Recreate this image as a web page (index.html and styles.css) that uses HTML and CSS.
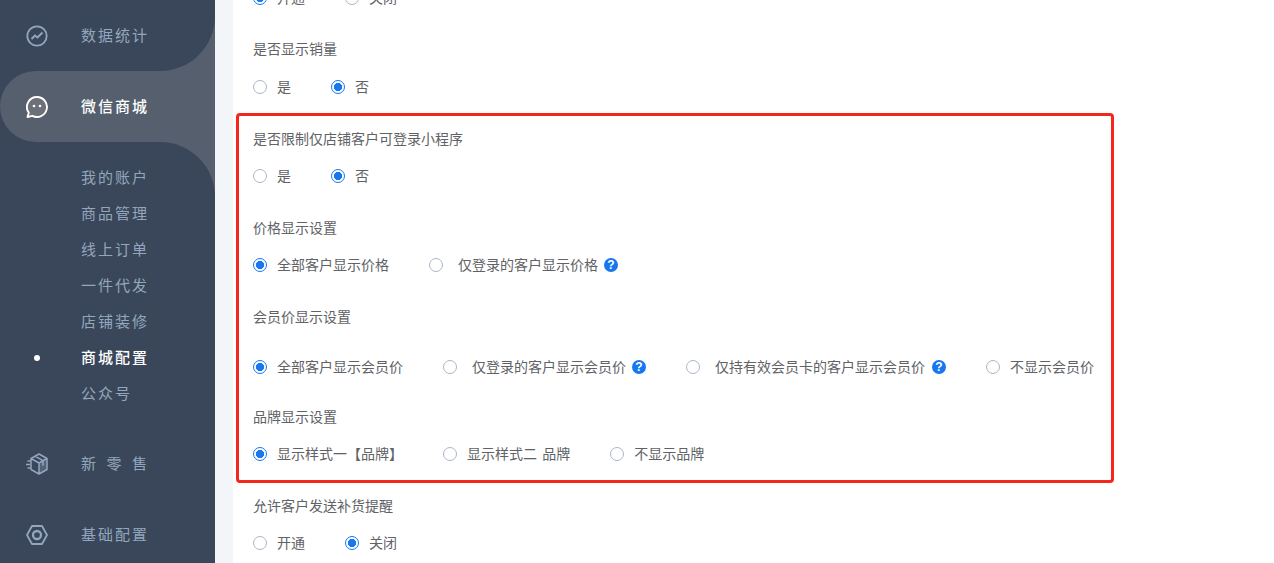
FILE: index.html
```html
<!DOCTYPE html>
<html lang="zh">
<head>
<meta charset="utf-8">
<title>商城配置</title>
<link rel="stylesheet" href="styles.css">
</head>
<body>
<div class="app">
  <aside class="sidebar">
    <div class="wave">
      <div class="nav-item before-active">
        <svg class="nav-icon" viewBox="0 0 22 22"><circle cx="11" cy="11" r="9.700" fill="none" stroke="currentColor" stroke-width="1.800"/><path d="M5.500 14l3.500-3.500 2.500 2 5-5" fill="none" stroke="currentColor" stroke-width="2"/></svg>
        <span class="nav-label">数据统计</span>
      </div>
      <div class="nav-item active">
        <svg class="nav-icon" viewBox="0 0 22 22"><path d="M11 1a10 10 0 1 1-4.600 18.900L1.500 21l1.300-4.200A10 10 0 0 1 11 1z" fill="#6d7078" stroke="#fff" stroke-width="1.900" stroke-linejoin="round"/><circle cx="8" cy="10" r="1.300" fill="#fff"/><circle cx="14" cy="10" r="1.300" fill="#fff"/></svg>
        <span class="nav-label">微信商城</span>
      </div>
      <ul class="submenu">
        <li class="sub-item">我的账户</li>
        <li class="sub-item">商品管理</li>
        <li class="sub-item">线上订单</li>
        <li class="sub-item">一件代发</li>
        <li class="sub-item">店铺装修</li>
        <li class="sub-item current">商城配置</li>
        <li class="sub-item">公众号</li>
      </ul>
    </div>
    <div class="nav-item">
      <svg class="nav-icon" viewBox="0 0 22 22"><path d="M13 10l8-4.500v11L13 21z" fill="currentColor" fill-opacity=".3"/><path d="M5 5.500L13 1l8 4.500v11L13 21l-8-4.500zM5 5.500l8 4.500 8-4.500M13 10v11M9 3.200l8 4.500v5" fill="none" stroke="currentColor" stroke-width="1.500" stroke-linejoin="round"/><path d="M1.500 8h3M0 11.500h4M1.500 15h3" stroke="currentColor" stroke-width="1.500"/></svg>
      <span class="nav-label spread">新零售</span>
    </div>
    <div class="nav-item">
      <svg class="nav-icon" viewBox="0 0 22 22"><path d="M6 2h10l5 9-5 9H6l-5-9z" fill="none" stroke="currentColor" stroke-width="1.800" stroke-linejoin="round"/><circle cx="11" cy="11" r="4" fill="none" stroke="currentColor" stroke-width="2.300"/></svg>
      <span class="nav-label">基础配置</span>
    </div>
  </aside>
  <div class="gutter"></div>
  <main class="main">
    <div class="form">
      <section class="field no-title">
        <div class="radios">
          <label class="radio"><i class="dot on"></i>开通</label>
          <label class="radio"><i class="dot"></i>关闭</label>
        </div>
      </section>
      <section class="field first">
        <h3 class="field-title">是否显示销量</h3>
        <div class="radios">
          <label class="radio"><i class="dot"></i>是</label>
          <label class="radio"><i class="dot on"></i>否</label>
        </div>
      </section>
      <section class="field">
        <h3 class="field-title">是否限制仅店铺客户可登录小程序</h3>
        <div class="radios">
          <label class="radio"><i class="dot"></i>是</label>
          <label class="radio"><i class="dot on"></i>否</label>
        </div>
      </section>
      <section class="field">
        <h3 class="field-title">价格显示设置</h3>
        <div class="radios">
          <label class="radio"><i class="dot on"></i>全部客户显示价格</label>
          <label class="radio wide"><i class="dot"></i>仅登录的客户显示价格<i class="help">?</i></label>
        </div>
      </section>
      <section class="field member">
        <h3 class="field-title">会员价显示设置</h3>
        <div class="radios">
          <label class="radio"><i class="dot on"></i>全部客户显示会员价</label>
          <label class="radio wide"><i class="dot"></i>仅登录的客户显示会员价<i class="help">?</i></label>
          <label class="radio wide"><i class="dot"></i>仅持有效会员卡的客户显示会员价<i class="help far">?</i></label>
          <label class="radio"><i class="dot"></i>不显示会员价</label>
        </div>
      </section>
      <section class="field">
        <h3 class="field-title">品牌显示设置</h3>
        <div class="radios">
          <label class="radio"><i class="dot on"></i>显示样式一【品牌】</label>
          <label class="radio"><i class="dot"></i>显示样式二 品牌</label>
          <label class="radio"><i class="dot"></i>不显示品牌</label>
        </div>
      </section>
      <section class="field">
        <h3 class="field-title">允许客户发送补货提醒</h3>
        <div class="radios">
          <label class="radio"><i class="dot"></i>开通</label>
          <label class="radio"><i class="dot on"></i>关闭</label>
        </div>
      </section>
    </div>
    <div class="highlight"></div>
  </main>
</div>
</body>
</html>
```
FILE: styles.css
```css
* { box-sizing: border-box; }
html, body { margin: 0; height: 100%; overflow: hidden; }
body { font-family: "Noto Sans CJK SC", "Liberation Sans", sans-serif; background: #fff; }
.app { display: flex; height: 563px; overflow: hidden; }

.sidebar { width: 215px; flex: none; background: #3a4659; color: #93a6bd; font-size: 15px; }
.wave { background: linear-gradient(to right, #3a4659 50%, #555f6e 50%); }
.nav-item { height: 71px; display: flex; align-items: center; padding-left: 26px; background: #3a4659; }
.before-active { border-bottom-right-radius: 55px; }
.active { background: #555f6e; color: #fff; border-radius: 36px 0 0 36px; font-weight: 500; }
.nav-icon { width: 22px; height: 22px; flex: none; }
.nav-label { margin: 0 0 2px 33px; letter-spacing: 2px; line-height: 20px; white-space: nowrap; }
.spread { letter-spacing: 10.5px; }
.submenu { list-style: none; margin: 0; padding: 17px 0 17px; background: #3a4659; border-top-right-radius: 55px; }
.sub-item { position: relative; height: 36px; line-height: 36px; padding-left: 81px; letter-spacing: 2px; }
.current { color: #fff; font-weight: 500; }
.current::before { content: ""; position: absolute; left: 34px; top: 16px; width: 6px; height: 6px; border-radius: 50%; background: #fff; }

.gutter { width: 18px; flex: none; background: #f3f6f9; }
.main { position: relative; flex: 1; min-width: 0; background: #fff; color: #606266; font-size: 14px; }
.form { margin-top: -13px; padding-left: 20px; }
.field { margin-bottom: 32px; }
.no-title { margin-bottom: 31px; }
.first .radios { margin-top: 18px; }
.field-title { margin: 0 0 17px; font-size: 14px; font-weight: 400; line-height: 20px; color: #606266; }
.member { margin-bottom: 30px; }
.member .field-title { margin-bottom: 30px; }
.radios { display: flex; gap: 40px; }
.radio { display: flex; align-items: center; gap: 10px; height: 20px; line-height: 20px; white-space: pre; word-spacing: 2px; }
.wide { gap: 15px; }
.dot { width: 14px; height: 14px; margin-top: 2px; flex: none; border-radius: 50%; border: 1px solid #a9b7c9; background: #fff; }
.dot.on { border-color: #1677f0; background: radial-gradient(circle, #1677f0 0 3.800px, #fff 4.400px); }
.help { width: 14px; height: 14px; margin: 2px 0 0 -9px; border-radius: 50%; background: #1677f0; color: #fff; font: 700 12px/14px "Liberation Sans", sans-serif; text-align: center; }
.far { margin-left: -8px; }
.highlight { position: absolute; left: 3px; top: 113px; width: 878px; height: 370px; border: 3px solid #f5261c; border-radius: 4px; pointer-events: none; }
```
